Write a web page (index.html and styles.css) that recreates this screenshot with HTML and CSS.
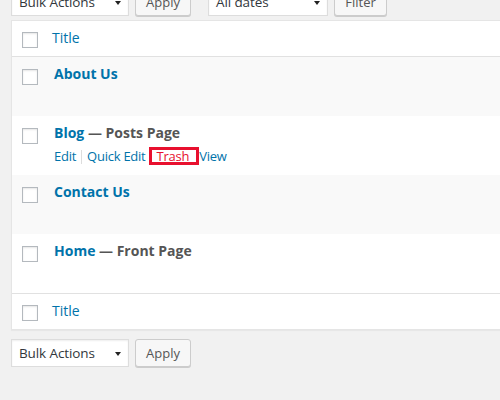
FILE: index.html
```html
<!DOCTYPE html>
<html>
<head>
<meta charset="utf-8">
<link rel="stylesheet" href="styles.css">
</head>
<body>
<div class="wrap">
  <div class="tablenav top">
    <div class="select bulk">Bulk Actions<svg class="arrow" width="6" height="4" viewBox="0 0 6 4"><polygon points="0,0 6,0 3,4" fill="#222"/></svg></div>
    <div class="btn apply">Apply</div>
    <div class="select dates">All dates<svg class="arrow" width="6" height="4" viewBox="0 0 6 4"><polygon points="0,0 6,0 3,4" fill="#222"/></svg></div>
    <div class="btn filter">Filter</div>
  </div>

  <div class="table">
    <div class="row head">
      <div class="check"><span class="cb"></span></div>
      <div class="title-col"><a class="col-link">Title</a></div>
    </div>

    <div class="row item alt">
      <div class="check"><span class="cb"></span></div>
      <div class="title-cell">
        <div class="title-line"><a class="row-title">About Us</a></div>
      </div>
    </div>

    <div class="row item">
      <div class="check"><span class="cb"></span></div>
      <div class="title-cell">
        <div class="title-line"><a class="row-title">Blog</a> — Posts Page</div>
        <div class="actions"><a class="act">Edit</a><span class="sep"></span><a class="act">Quick Edit</a><span class="trash-box">Trash</span><a class="act">View</a></div>
      </div>
    </div>

    <div class="row item alt">
      <div class="check"><span class="cb"></span></div>
      <div class="title-cell">
        <div class="title-line"><a class="row-title">Contact Us</a></div>
      </div>
    </div>

    <div class="row item">
      <div class="check"><span class="cb"></span></div>
      <div class="title-cell">
        <div class="title-line"><a class="row-title">Home</a> — Front Page</div>
      </div>
    </div>

    <div class="row foot">
      <div class="check"><span class="cb"></span></div>
      <div class="title-col"><a class="col-link">Title</a></div>
    </div>
  </div>

  <div class="tablenav bottom">
    <div class="select bulk">Bulk Actions<svg class="arrow" width="6" height="4" viewBox="0 0 6 4"><polygon points="0,0 6,0 3,4" fill="#222"/></svg></div>
    <div class="btn apply">Apply</div>
  </div>
</div>
</body>
</html>
```

FILE: styles.css
```css
html, body {
  margin: 0;
  padding: 0;
  overflow: hidden;
  background: #f1f1f1;
  font-family: "Open Sans", "Noto Sans", sans-serif;
  color: #444;
}

.wrap {
  padding-left: 11px;
}

.tablenav {
  display: flex;
  align-items: flex-start;
  height: 30px;
}

.tablenav.top {
  margin-top: -12px;
  height: 28px;
  margin-bottom: 4px;
}

.tablenav.bottom {
  margin-top: 9px;
}

.select {
  box-sizing: border-box;
  height: 28px;
  display: flex;
  align-items: center;
  justify-content: space-between;
  padding: 0 7px 0 7px;
  background: #fff;
  border: 1px solid #ddd;
  box-shadow: inset 0 1px 2px rgba(0, 0, 0, 0.07);
  font-size: 13.5px;
  letter-spacing: -0.1px;
  color: #32373c;
}

.select .arrow {
  flex: none;
  margin-top: 1px;
}

.select.bulk {
  width: 118px;
  margin-right: 6px;
}

.select.dates {
  width: 120px;
  margin-right: 6px;
}

.btn {
  box-sizing: border-box;
  height: 28px;
  display: flex;
  align-items: center;
  justify-content: center;
  background: #f7f7f7;
  border: 1px solid #ccc;
  border-radius: 3px;
  box-shadow: 0 1px 0 #ccc;
  font-size: 13px;
  color: #555;
}

.btn.apply {
  width: 56px;
  margin-right: 17px;
}

.btn.filter {
  width: 53px;
}

.table {
  background: #fff;
  border: 1px solid #e5e5e5;
  box-shadow: 0 1px 1px rgba(0, 0, 0, 0.04);
  margin-right: -30px;
}

.row {
  display: flex;
  align-items: flex-start;
}

.row.head {
  height: 35px;
  border-bottom: 1px solid #e1e1e1;
}

.row.foot {
  height: 35px;
  border-top: 1px solid #e1e1e1;
}

.row.item {
  height: 59px;
}

.row.alt {
  background: #f9f9f9;
}

.check {
  width: 40px;
  box-sizing: border-box;
  padding: 11px 0 0 10px;
  flex: none;
}

.item .check {
  padding-top: 12px;
}

.cb {
  display: block;
  box-sizing: border-box;
  width: 16px;
  height: 16px;
  background: #fff;
  border: 1px solid #b4b9be;
  box-shadow: inset 0 1px 2px rgba(0, 0, 0, 0.1);
}

.title-col {
  padding-top: 7px;
  line-height: 20px;
  font-size: 14px;
}

.col-link {
  color: #0073aa;
}

.title-cell {
  padding: 7px 0 0 2px;
}

.title-line {
  font-size: 14px;
  line-height: 20px;
  font-weight: 700;
  color: #555;
}

.row-title {
  color: #0073aa;
}

.actions {
  margin-top: 4px;
  font-size: 13px;
  line-height: 19px;
  letter-spacing: -0.25px;
  white-space: nowrap;
}

.act {
  color: #0073aa;
}

.sep {
  display: inline-block;
  width: 1px;
  height: 14px;
  background: #ddd;
  margin: 0 5px 0 5px;
  vertical-align: -3px;
}

.trash-box {
  display: inline-block;
  box-sizing: border-box;
  border: 3px solid #e8102e;
  background: #fff;
  color: #e8102e;
  line-height: 12px;
  padding: 0 7px 0 5px;
  margin-left: 3px;
}
```
